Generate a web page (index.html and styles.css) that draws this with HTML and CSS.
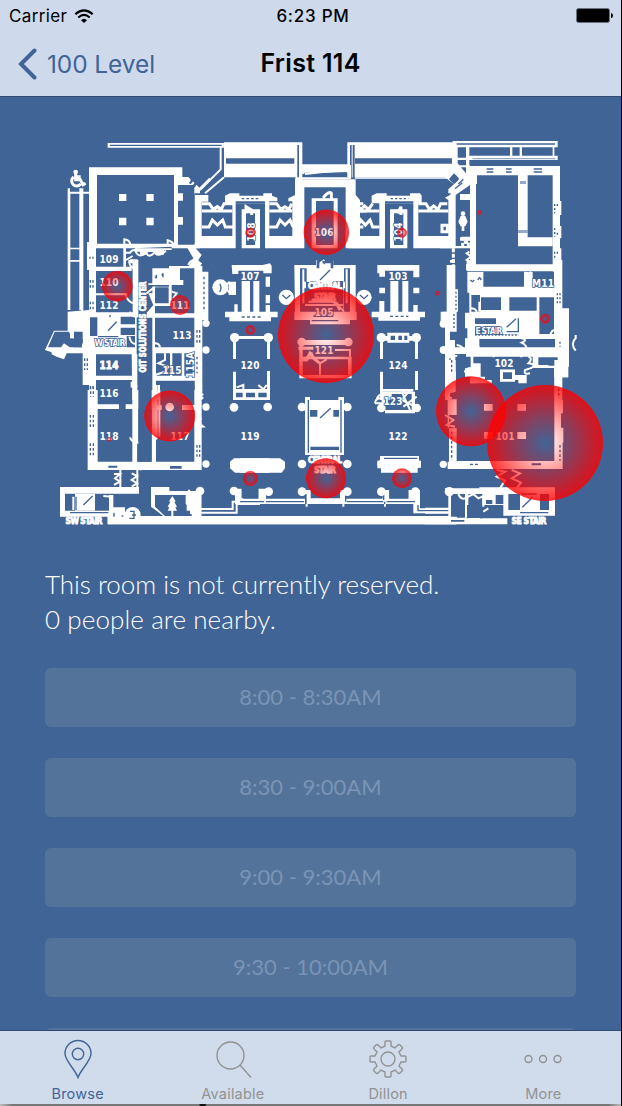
FILE: index.html
```html
<!DOCTYPE html>
<html lang="en">
<head>
<meta charset="utf-8">
<title>Frist 114</title>
<link rel="stylesheet" href="styles.css">
</head>
<body>
<div class="phone">
<header class="top">
  <div class="status">
    <div class="carrier"><span>Carrier</span>
      <svg width="20" height="14" viewBox="0 0 20 14" fill="none" stroke="#000" stroke-width="2.1"><path d="M1.3 5.2Q10-2.6 18.7 5.2M4.3 8.5Q10 3.4 15.700 8.500"/><path d="M7 11.200Q10 8.200 13 11.200L10 14z" fill="#000" stroke="none"/></svg>
    </div>
    <div class="time">6:23 PM</div>
    <svg class="battery" width="37" height="15" viewBox="0 0 37 15"><rect x=".5" y=".5" width="33" height="14" rx="2" fill="#000" stroke="#657080"/><path d="M35 5Q37 5 37 7.500T35 10z"/></svg>
  </div>
  <div class="nav">
    <div class="back"><svg width="20" height="32" viewBox="0 0 20 32"><path d="M16.500 2.500 3 16 16.500 29.500" fill="none" stroke="#416496" stroke-width="4" stroke-linecap="round"/></svg><span>100 Level</span></div>
    <h1>Frist 114</h1>
    <div></div>
  </div>
</header>
<main>
<svg class="map" width="621" height="450" viewBox="0 97 621 450">
<defs>
<radialGradient id="heat"><stop offset="0" stop-color="#f00" stop-opacity="0"/><stop offset=".5" stop-color="#f00" stop-opacity=".4"/><stop offset="1" stop-color="#f00" stop-opacity=".82"/></radialGradient>
</defs>
<!-- north-west hall and ramp -->
<g transform="translate(40 130) scale(.33333)">
<path class="w" d="M203 39H554V53H203zM147 112H427V141H445L480 175V190H463V350H147zM414 190H429V212H414zM414 261H429V284H414zM83 185H91V540H83zM118 175H130V540H118zM83 185H150V191H83zM83 353H130V358H83zM83 390H130V395H83zM83 175H90V190H83zM141 336H168V750H147V420H141zM147 341H480V355H147zM250 355H258V415H250zM285 355V365H300V374H320V366H346V374H372V360H395V350zM270 388H293V420H278V400H270zM387 408H480V420H387zM440 350H463L485 375 475 390 484 405 470 420 445 410 460 385z"/>
<path class="b" d="M171 135H402V341H171zM210 44H545V48H210zM414 165H463V344H414zM447 158L455 150 459 155 451 163zM456 171L464 163 468 168 460 176z"/>
<path class="w" d="M237 192H259V213H237zM319 192H341V213H319zM237 263H259V286H237zM319 263H341V286H319zM414 190H429V212H414zM414 261H429V284H414z"/>
<path class="l" d="M253 345V328Q270 330 271 345M383 348V331Q400 335 403 350M255 368H270Q275 360 285 360M258 390 278 378M285 360Q295 388 320 368Q325 388 345 366Q352 385 378 362"/>
<path class="l" d="M510 145 480 175"/>
<circle cx="107" cy="126" r="7" fill="#fff"/><path class="l thick" d="M107 132V149H121L129 164 137 160M107 140H122M101 141A15 15 0 1 0 122 162"/>
<path class="bl" d="M150 380V410M159 380V410" stroke-dasharray="6 7"/>
</g>
<!-- north wing -->
<g transform="translate(190 130) scale(.33333)">
<path class="w" d="M102 37H337V142H102zM472 37H795V142H472zM316 142H337V150H316zM330 103H485V128H330zM15 195H55V215H35V318H137V355H15zM105 197 120 190H148V197H220V190H246V197L262 203V214H238V355H225V220H137V355H127V220H105zM155 238H210V355H155zM295 205 315 195V148H497V195L510 210V355H467V172H343V355H232V318H307V214H295zM365 205H443V355H365zM497 318H585V355H497z"/>
<path class="b" d="M108 85H313V101H108zM495 85H786V101H495zM322 45H327V142H322zM480 45H485V142H480zM168 250H195V345H168zM378 213H431V345H378zM225 220V214H137V220zM400 130 470 126V134L370 140z"/>
<path class="l" d="M92 50V118L30 180M102 142 45 190M332 105V145H480V105M345 132 450 120V105M340 108V132"/>
<path class="l thick" d="M35 221H58L70 238 82 230 94 238 102 221H130M35 243H127M35 291H57L67 270 82 285 98 270 106 291H130M238 221H260L272 238 285 230 297 238 305 221M238 243H307M238 291H260L270 270 285 285 300 270 310 291M496 221H520M497 243H530M497 291H520M168 250V230L185 240V255M402 210V200Q418 182 424 190V213"/>
<path class="bl" d="M155 206H208" stroke-dasharray="8 6"/>
<path class="b" d="M0 150 8 142 13 147 5 155zM9 164 17 156 22 161 14 169z"/>
</g>
<g transform="translate(340 130) scale(.33333)">
<path class="w" d="M95 197 110 190H140V197H210V190H240L245 197V220H235V355H220V220H135V355H118V220H95zM150 238H202V355H150zM220 318H325V210L315 203 330 195 345 165 315 142 345 110V37H353V100L390 145V165L347 195V355H220zM27 355V318H118V355zM45 142H325V146H45z"/>
<path class="b" d="M162 250H190V345H162zM135 214H220V220H135zM38 45H44V142H38zM342 135 357 149 344 163 329 149z"/>
<path class="l thick" d="M30 221H50L62 238 74 228 86 238 98 221M30 243H118M30 291H52L62 270 76 285 90 270 98 291H118M235 221H258L268 238 281 228 294 238 302 221H322M235 243H325M306 286H322V305H306zM173 250 183 230V255"/>
<path class="bl" d="M152 206H205M335 168 368 147M340 178 373 157" stroke-dasharray="7 6"/>
</g>
<!-- north-east hall -->
<g transform="translate(440 130) scale(.33333)">
<path class="w" d="M38 33H353V52H38zM85 77H353V90H85zM38 33H50V118L22 145 15 140 38 115zM78 52H88V110H78zM210 52H217V78H210zM239 52H246V78H239zM338 52H343V78H338zM50 83H85V90H50zM50 106H90V112H50zM78 108H360V213H364V255H360V288H364V325H360V355H364V398H360V420H78V403H90V162H68L48 185V190H25V178L78 130zM60 193H90V210H60zM60 322H90V332H60zM0 318H45V348H90V355H0z"/>
<path class="b" d="M108 162H111V136H338V403H108V370H95L88 385 95 398 110 403H108zM42 130 57 145 42 162 27 147zM98 90H338V108H98zM50 40H345V44H50z"/>
<path class="w" d="M234 130H263V322H338V349H234zM60 193H108V210H60zM64 320H106V331H64zM90 165H108V403H90z"/>
<path class="b" d="M240 153H258V162H240zM234 300H263V309H234zM98 84H346V88H98z" opacity=".55"/>
<path class="bl" d="M140 117H160M140 126H160M198 117H215M198 126H215M281 117H306M281 126H306M55 162 70 148M45 176 67 158"/>
<path class="bl" d="M344 222V250M352 222V232M344 294V320M352 308V318M344 365V390M352 365V375" stroke-dasharray="6 6"/>
<circle cx="69" cy="251" r="7" fill="#fff"/><path class="w" d="M62 258H76L83 275 76 289H73V303H65V289H62L55 275z"/>
<path class="l thick" d="M68 350V338L85 335V350M40 355V420" stroke-dasharray="12 4"/><path class="l" d="M88 365 80 370 94 380 80 390 95 398"/>
</g>
<!-- west rooms -->
<g transform="translate(40 260) scale(.33333)">
<path class="w" d="M147 0H168V420H147V375H128V237H98V232H88V215H44L24 262H63L72 250 90 262H128V280H80L72 298 50 290 35 283V277L15 270 42 212H83V155L147 150zM147 20H275V33H147zM165 100H262V106H165zM147 157H295V172H147zM278 0H295V165H278zM128 172H290V283H128zM147 347H290V360H147zM275 283H292V420H277zM337 25H387V70H337zM387 18H487V280H463V60H430V75H325V70H387zM325 100H337V80H387V62H395V138H345V160H487V173H345V262H487V280H348V420H337V173H320V158L340 135zM337 347H487V362H337zM390 280H397V347H390zM425 280H433V347H425zM463 280H487V420H465zM487 35H505V180H487z"/>
<path class="b" d="M150 172H172V228H150zM242 170H285V193H242zM242 203H285V225H242zM420 25H463V60H420zM345 82H386V130H345zM100 215H128V262H100zM260 228H285V262H260zM48 220H90V232H98V237H90V262L72 248 62 258H28z"/>
<path class="w" d="M90 205H102V235H90z"/>
<path class="l" d="M268 0Q265 20 285 26M255 100Q262 125 280 130M270 155Q272 170 290 170M268 230Q272 250 285 252M128 262Q130 240 150 240L160 250H250M155 283V345M126 70V155M340 250Q358 248 360 262M320 100 345 80M350 375V420M357 375V420M395 95 410 100 400 115M345 345 375 335 385 320 355 310 375 300V280M275 365V380L292 378M485 375 470 395 490 405M445 15Q450 0 465 0L485 12"/>
<path class="bl" d="M204 212 230 185M174 230H235M210 172V165M349 44V55M369 52V40M349 55 345 50M369 40 365 46"/>
<path class="bl" d="M151 60V90M159 60V90M151 125V150M159 125V150M134 295V330M142 295V330M151 378V412M159 378V412M471 210V255M479 210V255M471 290V340M492 50V150" stroke-dasharray="8 7"/>
<circle cx="498" cy="190" r="11" fill="#fff"/><circle cx="498" cy="270" r="11" fill="#fff"/>
</g>
<!-- central halls -->
<g transform="translate(190 260) scale(.33333)">
<path class="w" d="M125 15H218L240 10 245 18V40H220V32H145V42H127zM116 65H138V105H116zM227 50H240V80H227zM227 105H240V130H227zM155 63H180V155H155zM190 63H208V155H190zM133 133H143V155H263V172H243V184H118V172H105V155H133zM227 135H240V155H227zM562 15H688V52H670V32H585V50H568V40H562zM568 83H585V100H568zM670 83H688V100H670zM601 63H625V155H601zM637 63H655V155H637zM568 123H583V155H705V172H690V182H565V172H545V155H568zM670 135H683V155H670zM313 15H378V0H430V15H497V155H500V180H480V193H360V180H313V155H315zM328 240H485V255H328zM328 255H338V345H328zM328 290H485V298H328zM474 290H485V355H474zM328 345H485V355H328zM134 228H234V237H134zM129 235H138V297H129zM231 235H240V297H231zM129 335H138V420H129zM231 333H240V420H231zM130 387H240V398H130zM573 228H680V242H573zM570 235H579V297H570zM675 235H684V297H675zM570 335H579V420H570zM675 333H684V390H675zM570 387H670V395H570zM592 218H658V248H592zM345 411H360V420H345zM445 411H462V420H445zM752 155H780V420H765V185H752z"/>
<path class="b" d="M330 25H350V155H330zM462 25H480V155H462zM380 0H388V25H380zM422 0H430V25H422zM348 66H460V155H348zM388 0H422V10H388zM370 166H430V171H370zM350 257H450V263H350zM350 280H465V285H350zM602 227H615V240H602zM625 227H636V240H625zM643 227H652V240H643zM148 400H160V410H148zM178 400H195V420H178zM205 400H220V410H205z"/>
<path class="l" d="M322 20V155M488 20V155M340 28V130M470 28V130M355 125H435L462 155M345 135H460M345 65V85M462 65V85M350 292 365 280 372 297M390 345V310L410 298M435 270H480V290M118 65 105 82 118 98M390 10 403 0M135 420V400H235V420M140 382 160 375V390M205 375 220 388 230 375M560 420Q565 400 580 405M600 405 615 420M630 400 655 415 640 390"/>
<path class="l thick" d="M365 120H420L440 130 450 150M325 265H370M328 300H350L360 280 372 296 390 310"/>
<path class="bl" d="M390 60 420 30M360 65H380M430 65H460M398 2 403 10 408 2M365 182H445" />
<path class="bl" d="M155 171H212M600 169H655" stroke-dasharray="9 7"/>
<g fill="#fff"><circle cx="91" cy="82" r="24"/><circle cx="289" cy="112" r="23"/><circle cx="522" cy="112" r="23"/><circle cx="134" cy="233" r="14"/><circle cx="235" cy="233" r="14"/><circle cx="574" cy="233" r="14"/><circle cx="679" cy="233" r="14"/><circle cx="335" cy="246" r="13"/><circle cx="475" cy="246" r="13"/><circle cx="760" cy="192" r="11"/><circle cx="760" cy="270" r="11"/></g>
<path class="bl" d="M89 72Q97 82 89 96M277 105 289 116 301 105M510 105 522 116 534 105"/>
</g>
<!-- east rooms -->
<g transform="translate(430 260) scale(.33333)">
<path class="w" d="M50 15H76V88H84V155H80V215H57V200H50V180H40V155H50zM370 0H397V145H417V320H414V352H397V450H374V352H315V320H308V290H108V282H50V262H105V235H112V205H105V158H118V98H112V35H370zM110 15H370V33H110zM52 240H75V285H82V290H76V335H78V370H50V335H53V290H50zM122 285H130V310H152V350H165V360H185V370H122V350H105V325H122zM210 328H255V365H210zM255 345H290V370H265V360H255zM60 0H75V8H60zM188 285H194V300H188zM270 280H278V305H270zM110 0H135V15H110z"/>
<path class="b" d="M160 36H285V80H160zM308 36H372V80H308zM124 105H150V155H124zM153 112H213V150H153zM238 112H320V152H238zM328 112H372V222H328zM135 175H198V192H135zM148 237H375V262H148zM325 292H383V315H325zM153 292H295V328H153zM219 337H246V357H219zM310 320H372V375H310zM135 200H215V225H135z"/>
<path class="l" d="M285 35V95M303 35 292 50 303 65 290 80M120 105Q130 85 145 88M120 145Q140 145 140 158M148 125V155M340 105Q345 85 360 100M372 210Q360 215 360 235M135 235Q150 240 130 250Q150 255 145 268M275 235Q295 240 275 248Q290 255 290 268M385 235 400 240 388 250 402 260M437 225V235Q420 250 437 272M80 255Q95 255 105 275M295 290Q310 295 295 310Q325 315 300 325L285 330Q280 345 300 340M130 350 105 335Q110 320 135 325M310 321H374"/>
<path class="bl" d="M230 202 258 176M265 175V215H230M121 60 127 65 133 60M143 60 149 53 154 60M355 315H390M135 225H265"/>
<path class="bl" d="M78 95V150M72 162V205M60 295V330M382 100V135M390 100V135M390 245V260M389 355V420" stroke-dasharray="6 6"/>
<path class="l thick" d="M140 228H265" stroke-dasharray="5 5"/>
<circle cx="41" cy="190" r="11" fill="#fff"/><circle cx="41" cy="270" r="11" fill="#fff"/>
</g>
<!-- south-west -->
<g transform="translate(40 390) scale(.33333)">
<path class="w" d="M143 0H173V215H277V158H292V215H335V0H348V215H463V0H485V240H143zM277 0H295V158H277zM173 43H237V57H173zM257 43H295V57H257zM348 45H365V60H348zM426 45H463V60H426zM60 291H297V311H60zM60 291H75V380H60zM60 362H218V380H60zM207 315H220V365H207zM333 291H388V303H468V311H484V380H1250V403H203V380H373L333 350zM218 352H255V385H218zM582 0H660V30H582zM570 215 582 205H720L735 215V235L725 248H585L570 235z"/>
<path class="b" d="M295 57H335V215H292V158H295zM345 315H440V362H450V372H455V380H377L345 350zM205 227H232V233H205zM390 228H425V236H390zM588 8H610V22H588zM618 8H650V22H618zM225 386H630V394H600V390H225z" />
<path class="w" d="M203 378H1250V403H203zM468 300H484V380H468zM105 312H165V362H105z"/>
<path class="l" d="M241 240V292M222 252H240L225 265 240 275 222 285M292 240V292M275 250 292 258 275 270 292 280 275 290M270 142Q275 158 295 158M340 155 352 142M300 240 315 225 330 222M190 318 215 320M440 310V340L465 365M445 300 465 322M350 0V140M358 0V140M485 0 470 15 490 25M485 85 470 95 490 110 475 112M100 320V360M484 357H578V335H588V305H607V335H660M484 368H590V342H660"/>
<path class="bl" d="M130 345 158 318M108 320V360M108 368H160M90 368H205M222 368V380M245 378H250"/>
<path class="bl" d="M152 -10V20M160 -10V20M151 75V115M160 75V115M151 160V202M160 160V202M471 165V200M479 165V200" stroke-dasharray="8 6"/>
<g fill="#fff"><circle cx="389" cy="51" r="13"/><circle cx="498" cy="51" r="11"/><circle cx="498" cy="222" r="11"/><circle cx="480" cy="303" r="13"/><circle cx="582" cy="52" r="13"/><circle cx="582" cy="303" r="13"/><circle cx="278" cy="375" r="24"/><path d="M397 318 407 334 403 336 411 350 406 352 411 362H400V378H394V362H383L388 352 383 350 391 336 387 334z"/></g>
<path class="bl" d="M270 364H282V385H268M288 375H276"/>
</g>
<!-- south centre -->
<g transform="translate(240 390) scale(.33333)">
<path class="w" d="M0 205H88L98 215V235L88 248H0zM0 0H90V30H0zM195 22H210V30H300V22H312V195H195zM420 198H537V212H543V233H533V248H423V235H412V212H420zM425 5H525V70H435V60H425zM200 300H315V342H200zM0 326H195V342H0zM315 326H432V342H315zM436 326H540V355H650V370H523V342H436zM-15 296H5V342H-15zM55 296H78V330H55zM175 300H205V312H175zM428 300H448V335H428zM505 300H540V335H505z"/>
<path class="b" d="M0 8H8V22H0zM18 8H45V22H18zM55 8H80V22H55zM203 30H207V188H203zM301 30H305V188H301zM210 60H232V80H210zM280 60H297V80H280zM211 170H297V180H211zM212 295H300V325H212zM432 203H532V207H432zM455 12H515V60H435V30H455zM5 296H55V325H5zM448 296H505V325H448zM0 333H192V337H0zM320 333H430V337H320zM532 345H536V360H650V364H532zM440 333H525V337H440zM15 300H48V320H15z"/>
<path class="l" d="M405 40Q405 22 430 25M405 40H430M485 5 510 60M510 0 485 30 525 50M490 50 530 20M200 342V350M310 342V350M435 342V350M75 305V342M523 342V370"/>
<path class="bl" d="M240 84 272 55M317 320V335M431 300V330"/>
<g fill="#fff"><circle cx="83" cy="51" r="13"/><circle cx="186" cy="51" r="13"/><circle cx="322" cy="51" r="13"/><circle cx="424" cy="54" r="13"/><circle cx="530" cy="54" r="13"/><circle cx="186" cy="222" r="13"/><circle cx="322" cy="222" r="13"/><circle cx="424" cy="222" r="12"/><circle cx="531" cy="222" r="12"/><circle cx="86" cy="305" r="13"/><circle cx="186" cy="305" r="13"/><circle cx="322" cy="305" r="13"/><circle cx="424" cy="305" r="13"/><circle cx="526" cy="305" r="13"/></g>
</g>
<!-- south-east -->
<g transform="translate(425 360) scale(.33333)">
<path class="w" d="M68 0H92V95L75 100V118H95V165H72V205H95V303H388V245H413V327H68V305H72V205H68V95H65V30H68zM388 0H430V52H408V120H414V160H408V203H415V248H388zM135 50H158V70H135zM177 132H203V152H177zM277 132H303V152H277zM177 216H203V237H177zM277 216H303V237H277zM70 395H78V470H70zM60 385H240V402H60zM163 382H390V467H235V435H125V475H247V493H0V473H120V395H163zM0 443H78V449H0zM0 455H78V461H0z"/>
<path class="b" d="M250 402H285V450H250zM345 402H372V450H345zM190 445H230V472H190zM78 402H118V470H78zM130 402H172V475H130zM183 420H205V432H183zM212 405H235V432H212zM320 310H348V316H320zM78 480H118V485H78z"/>
<path class="bl" d="M135 313H160" stroke-dasharray="9 6"/>
<path class="l" d="M60 85 85 90 62 105 80 115M60 165 85 180 65 195 90 200M100 402Q110 425 130 410L145 402 160 415 190 402M175 405V440M205 402V435M215 330 240 335 215 350 240 362 225 385M260 330 285 340 260 355 288 368 275 385M123 400V470M130 477H165M175 455 190 445"/>
<path class="bl" d="M292 442 323 412M285 458H370M290 402H335"/>
<path class="bl" d="M80 0V35M80 215V300M401 85V115M405 255V302" stroke-dasharray="8 6"/>
<circle cx="55" cy="313" r="11" fill="#fff"/><circle cx="73" cy="395" r="14" fill="#fff"/>
</g>
<g class="labels">
<text x="109" y="263">109</text><text x="109" y="286">110</text><text x="109" y="309">112</text><text x="109" y="369" class="heavy">114</text><text x="109" y="397">116</text><text x="109" y="440">118</text><text x="180" y="309">111</text><text x="182" y="339">113</text><text x="172" y="374">115</text><text x="180" y="440">117</text>
<text x="250" y="280">107</text><text x="398" y="280">103</text><text x="324" y="236">106</text><text x="324" y="316">105</text><text x="324" y="354">121</text><text x="250" y="369">120</text><text x="398" y="369">124</text><text x="250" y="440">119</text><text x="398" y="440">122</text><text x="393" y="405">123</text><text x="504" y="367">102</text><text x="505" y="440">101</text><text x="543" y="287" textLength="22">M11</text>
<text transform="translate(255 232) rotate(-90)">108</text><text transform="translate(402 232) rotate(-90)">104</text><text transform="translate(194 365) rotate(-90)">115A</text>
<text class="small heavy" transform="translate(146 327) rotate(-90)" textLength="91" lengthAdjust="spacingAndGlyphs">OIT SOLUTIONS CENTER</text>
<text class="small" x="110" y="346" textLength="31">W STAIR</text><text class="small heavy" x="84" y="524" textLength="37">SW STAIR</text><text class="small heavy" x="529" y="524" textLength="35">SE STAIR</text><text class="small" x="489" y="334" textLength="27">E STAIR</text>
<text class="small heavy" x="325" y="289" textLength="34">CENTRAL</text><text class="small heavy" x="325" y="300" textLength="22">STAIR</text><text class="small heavy" x="325" y="463" textLength="34">CENTRAL</text><text class="small heavy" x="325" y="473" textLength="22">STAIR</text>
</g>
<g fill="url(#heat)">
<circle cx="326.300" cy="232.300" r="22.700"/><circle cx="117.300" cy="286.300" r="15.300"/><circle cx="180" cy="305" r="10"/><circle cx="326" cy="335" r="48"/><circle cx="169.700" cy="416" r="25.500"/><circle cx="326" cy="478.300" r="20"/><circle cx="402" cy="478.300" r="10"/><circle cx="250.300" cy="478.500" r="7.500"/><circle cx="471" cy="411.300" r="35"/><circle cx="545" cy="443" r="58"/>
<g stroke="#e01525" stroke-opacity=".75"><circle cx="250.300" cy="232.700" r="4.500"/><circle cx="402" cy="232.700" r="4.500"/><circle cx="479.500" cy="212.500" r="2"/><circle cx="250.300" cy="330" r="4.500"/><circle cx="437.300" cy="293.300" r="2"/><circle cx="545" cy="318.700" r="4.500"/><circle cx="109" cy="439.300" r="1.800"/></g>
</g>
</svg>
<p class="info"><span class="l1">This room is not currently reserved.</span><br><span class="l2">0 people are nearby.</span></p>
<div class="slots">
<div class="slot">8:00 - 8:30AM</div><div class="slot">8:30 - 9:00AM</div><div class="slot">9:00 - 9:30AM</div><div class="slot">9:30 - 10:00AM</div><div class="slot"></div>
</div>
</main>
<nav class="tabs">
<div class="tab active"><svg width="40" height="40" viewBox="0 0 40 40"><path d="M20 38.500C17 30 7 22 7 14.500a13 13 0 0 1 26 0C33 22 23 30 20 38.500z"/><circle cx="20" cy="15" r="5.700"/></svg><span>Browse</span></div>
<div class="tab"><svg width="40" height="40" viewBox="0 0 40 40"><circle cx="17.500" cy="16.500" r="13.500"/><path d="M27 26 38 38.500"/></svg><span>Available</span></div>
<div class="tab"><svg width="40" height="40" viewBox="0 0 40 40"><path d="M17 7V3Q17 2 18 2H22Q23 2 23 3V7L27 9 30 6Q31 5 32 6L34 8Q35 9 34 10L31 13 33 17H37Q38 17 38 18V22Q38 23 37 23H33L31 27 34 30Q35 31 34 32L32 34Q31 35 30 34L27 31 23 33V37Q23 38 22 38H18Q17 38 17 37V33L13 31 10 34Q9 35 8 34L6 32Q5 31 6 30L9 27 7 23H3Q2 23 2 22V18Q2 17 3 17H7L9 13 6 10Q5 9 6 8L8 6Q9 5 10 6L13 9z"/><circle cx="20" cy="20" r="7"/></svg><span>Dillon</span></div>
<div class="tab"><svg width="40" height="40" viewBox="0 0 40 40"><circle cx="5.500" cy="20" r="3.500"/><circle cx="20" cy="20" r="3.500"/><circle cx="34.500" cy="20" r="3.500"/></svg><span>More</span></div>
</nav>
<div class="edge"></div>
</div>
</body>
</html>
```
FILE: styles.css
```css
* { box-sizing: border-box; }
body { margin: 0; background: #000; font-family: Inter, "Liberation Sans", sans-serif; }
.phone { width: 621px; height: 1106px; display: flex; flex-direction: column; background: #416496; overflow: hidden; }
.top { height: 97px; flex: none; background: #cedaec; border-bottom: 1px solid #2e4a75; }
.status { height: 31px; display: grid; grid-template-columns: 1fr auto 1fr; align-items: center; padding: 0 9px; font-size: 17px; }
.carrier { display: flex; align-items: center; gap: 7px; letter-spacing: .35px; }
.time { font-weight: 500; letter-spacing: .75px; padding-left: 5px; }
.battery { justify-self: end; margin-right: -1px; }
.nav { height: 65px; display: grid; grid-template-columns: 1fr auto 1fr; align-items: center; padding: 0 18px; }
.back { display: flex; align-items: center; gap: 9px; color: #416496; font-size: 24.5px; letter-spacing: -.1px; }
.nav h1 { margin: -2px 0 0; font-size: 25px; font-weight: 600; letter-spacing: .3px; }
main { flex: 1; min-height: 0; overflow: hidden; }
.map { display: block; }
.w { fill: #fff; }
.b { fill: #416496; }
.l { fill: none; stroke: #fff; stroke-width: 6; }
.thick { stroke-width: 9; }
.bl { fill: none; stroke: #416496; stroke-width: 4; }
.labels { fill: #fff; font: bold 10px "DejaVu Sans Condensed", "DejaVu Sans", sans-serif; text-anchor: middle; stroke: #416496; stroke-width: 1.5px; paint-order: stroke; }
.labels .small { font-size: 8.5px; }
.labels .heavy { stroke: #fff; stroke-width: .8px; }
.info { margin: 20px 45px 0; color: #fff; font: 300 26px/35px Lato, sans-serif; white-space: nowrap; }
.l1 { letter-spacing: -.03px; }
.l2 { letter-spacing: .1px; }
.slots { margin: 31px 45px 0; display: flex; flex-direction: column; gap: 31px; }
.slot { height: 59px; flex: none; border-radius: 6px; background: #53739a; color: #7b94b5; font: 400 22px/58px Lato, sans-serif; text-align: center; }
.tabs { height: 74px; flex: none; display: grid; grid-template-columns: repeat(4, 1fr); background: #d0dcec; border-top: 1px solid #2e4a75; color: #929292; }
.tab { display: flex; flex-direction: column; align-items: center; padding-top: 8px; font-size: 14.5px; letter-spacing: .2px; }
.tab svg { fill: none; stroke: currentColor; stroke-width: 1.4; }
.tab span { line-height: 20px; margin-top: 5px; }
.active { color: #416496; }
.edge { height: 2px; flex: none; background: linear-gradient(90deg, #bbb, #777 2%, #777 32%, #111 32.3%, #111 33%, #777 33.3%, #777 98%, #bbb); }
```
